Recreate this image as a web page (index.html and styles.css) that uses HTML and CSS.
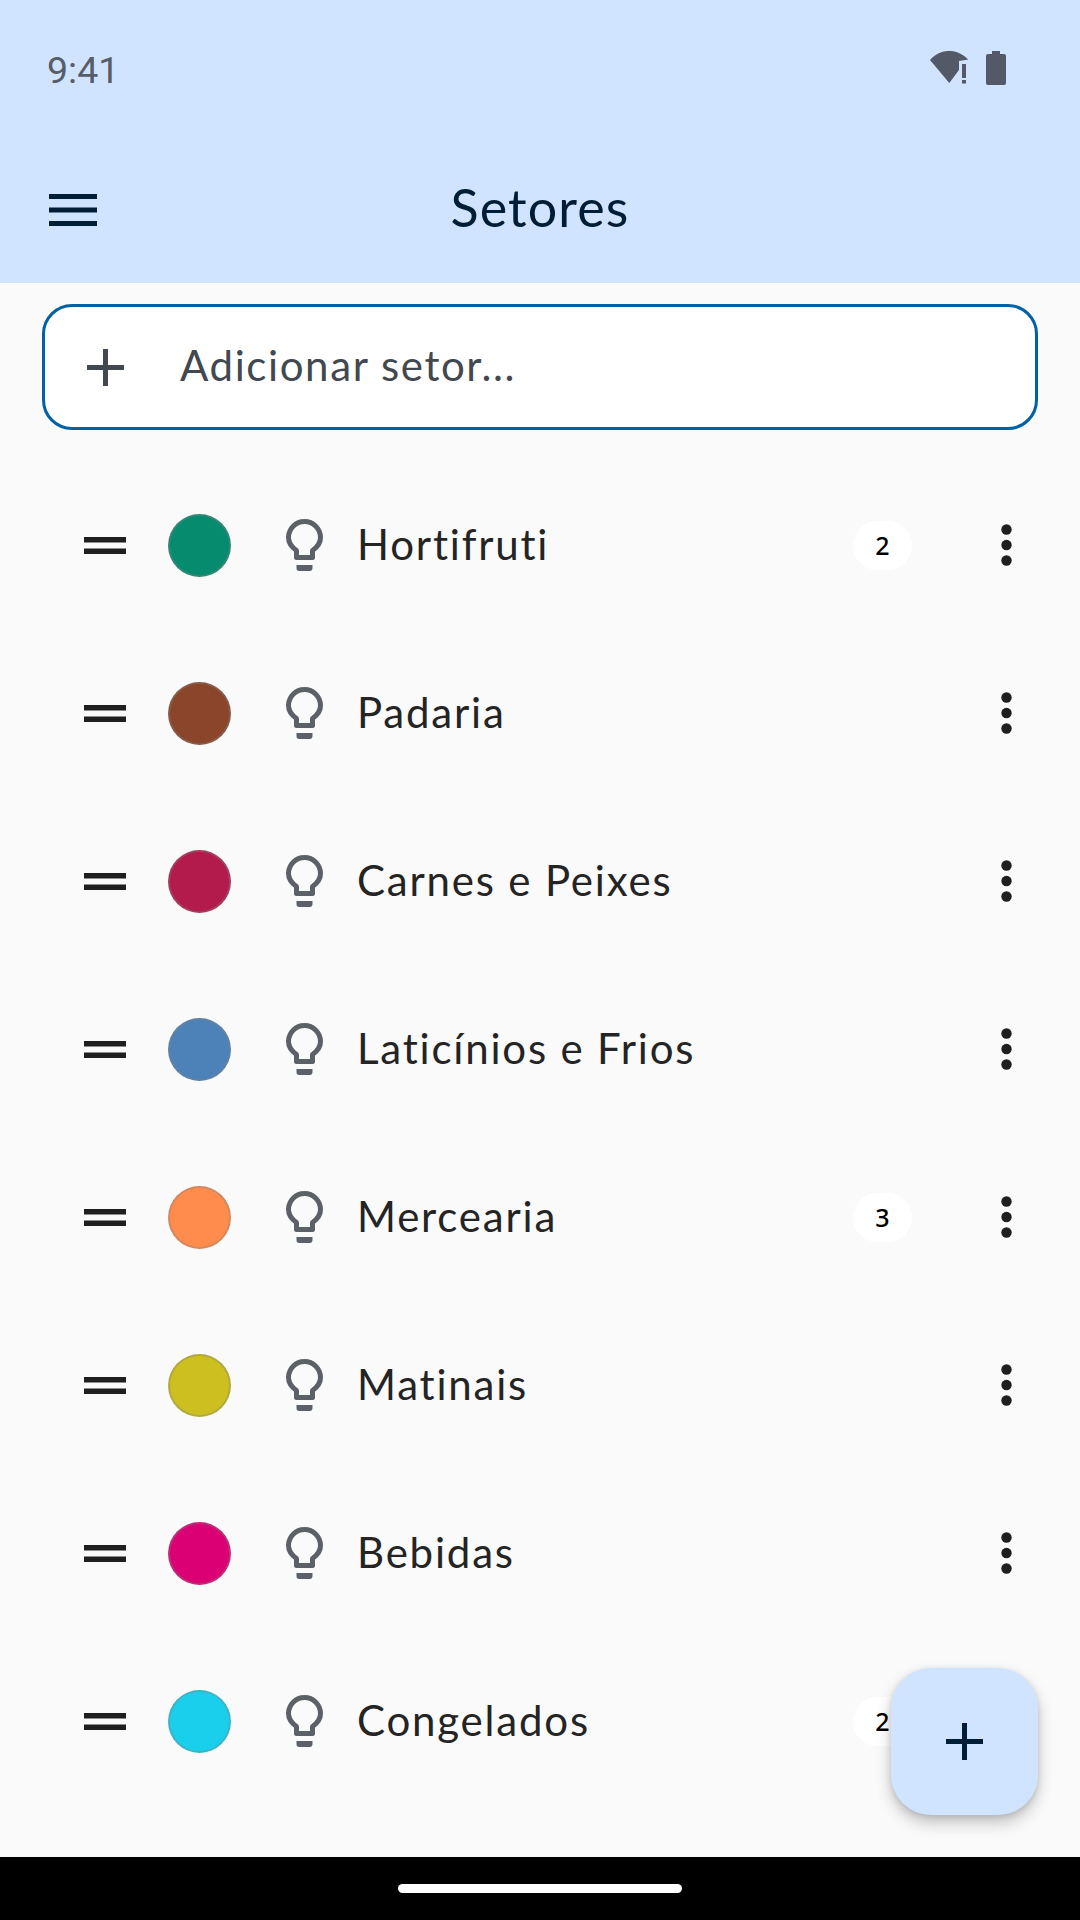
FILE: index.html
```html
<!DOCTYPE html>
<html lang="pt">
<head>
    <meta charset="utf-8">
    <meta name="viewport" content="width=device-width,initial-scale=1.0">
    <title>Setores</title>
    <link rel="stylesheet" href="styles.css">
</head>
<body>
<svg class="defs" width="0" height="0">
    <symbol id="i-handle" viewBox="0 0 42 17"><path d="M0 0h42v5.500H0zM0 11.500h42V17H0z"/></symbol>
    <symbol id="i-bulb" viewBox="0 0 37 52">
        <path d="M18.500 2.500A16 16 0 0 0 2.500 18.500c0 5.500 3 9.500 8 13v7h16v-7c5-3.500 8-7.500 8-13a16 16 0 0 0-16-16Z" fill="none" stroke="currentColor" stroke-width="5" stroke-linejoin="round"/>
        <path d="M10.500 46h16v3a3 3 0 0 1-3 3h-10a3 3 0 0 1-3-3z" fill="currentColor"/>
    </symbol>
    <symbol id="i-dots" viewBox="0 0 11 42"><circle cx="5.500" cy="5.500" r="5.200"/><circle cx="5.500" cy="21" r="5.200"/><circle cx="5.500" cy="36.500" r="5.200"/></symbol>
    <symbol id="i-plus" viewBox="0 0 37 37"><path d="M16 0h5v16h16v5H21v16h-5V21H0v-5h16z"/></symbol>
</svg>

<div class="screen">
    <header class="appbar">
        <div class="status">
            <span class="time">9:41</span>
            <div class="status-icons">
                <svg class="wifi" viewBox="0 0 39 33"><path d="M0 9C11-3 27-3 38.300 8.500L29 10v9L19.300 32Z"/><path d="M32 13h4v14h-4zM32 29h4v3.500h-4z"/></svg>
                <svg class="battery" viewBox="0 0 20 34"><path d="M6 0h8v3h4a2 2 0 0 1 2 2v27a2 2 0 0 1-2 2H2a2 2 0 0 1-2-2V5a2 2 0 0 1 2-2h4z"/></svg>
            </div>
        </div>
        <div class="toolbar">
            <svg class="menu" viewBox="0 0 48 32"><path d="M0 0h48v5H0zM0 13.500h48v5H0zM0 27h48v5H0z"/></svg>
            <h1 class="title">Setores</h1>
        </div>
    </header>

    <main class="content">
        <div class="add-box">
            <svg class="add-icon"><use href="#i-plus"/></svg>
            <span class="add-text">Adicionar setor...</span>
        </div>

        <ul class="sectors">
            <li class="sector">
                <svg class="handle"><use href="#i-handle"/></svg>
                <span class="swatch c-green"></span>
                <svg class="bulb"><use href="#i-bulb"/></svg>
                <span class="name">Hortifruti</span>
                <span class="badge">2</span>
                <svg class="dots"><use href="#i-dots"/></svg>
            </li>
            <li class="sector">
                <svg class="handle"><use href="#i-handle"/></svg>
                <span class="swatch c-brown"></span>
                <svg class="bulb"><use href="#i-bulb"/></svg>
                <span class="name">Padaria</span>
                <svg class="dots"><use href="#i-dots"/></svg>
            </li>
            <li class="sector">
                <svg class="handle"><use href="#i-handle"/></svg>
                <span class="swatch c-crimson"></span>
                <svg class="bulb"><use href="#i-bulb"/></svg>
                <span class="name">Carnes e Peixes</span>
                <svg class="dots"><use href="#i-dots"/></svg>
            </li>
            <li class="sector">
                <svg class="handle"><use href="#i-handle"/></svg>
                <span class="swatch c-blue"></span>
                <svg class="bulb"><use href="#i-bulb"/></svg>
                <span class="name">Laticínios e Frios</span>
                <svg class="dots"><use href="#i-dots"/></svg>
            </li>
            <li class="sector">
                <svg class="handle"><use href="#i-handle"/></svg>
                <span class="swatch c-orange"></span>
                <svg class="bulb"><use href="#i-bulb"/></svg>
                <span class="name">Mercearia</span>
                <span class="badge">3</span>
                <svg class="dots"><use href="#i-dots"/></svg>
            </li>
            <li class="sector">
                <svg class="handle"><use href="#i-handle"/></svg>
                <span class="swatch c-yellow"></span>
                <svg class="bulb"><use href="#i-bulb"/></svg>
                <span class="name">Matinais</span>
                <svg class="dots"><use href="#i-dots"/></svg>
            </li>
            <li class="sector">
                <svg class="handle"><use href="#i-handle"/></svg>
                <span class="swatch c-pink"></span>
                <svg class="bulb"><use href="#i-bulb"/></svg>
                <span class="name">Bebidas</span>
                <svg class="dots"><use href="#i-dots"/></svg>
            </li>
            <li class="sector">
                <svg class="handle"><use href="#i-handle"/></svg>
                <span class="swatch c-cyan"></span>
                <svg class="bulb"><use href="#i-bulb"/></svg>
                <span class="name">Congelados</span>
                <span class="badge">2</span>
                <svg class="dots"><use href="#i-dots"/></svg>
            </li>
        </ul>

        <button class="fab"><svg class="fab-icon"><use href="#i-plus"/></svg></button>
    </main>

    <footer class="navbar"><span class="home-pill"></span></footer>
</div>
</body>
</html>
```

FILE: styles.css
```css
*{box-sizing:border-box;  margin:0;  padding:0;  }
body{background:#fafafa;  font-family:'Lato','Noto Sans',sans-serif;  }
.defs{position:absolute;  }

.screen{width:1080px;  height:1920px;  display:flex;  flex-direction:column;  overflow:hidden;  }

/* top bar */
.appbar{background:#d1e4ff;  height:283px;  flex:none;  }
.status{height:136px;  padding:0 74px 0 47px;  display:flex;  align-items:center;  justify-content:space-between;  }
.time{font:37.500px 'Roboto',sans-serif;  color:#565c68;  padding-top:4px;  }
.status-icons{display:flex;  align-items:flex-start;  gap:17px;  }
.wifi{width:39px;  height:33px;  fill:#535966;  }
.battery{width:20px;  height:34px;  fill:#535966;  }

.toolbar{height:147px;  padding:0 49px;  display:flex;  align-items:center;  }
.menu{width:48px;  height:32px;  fill:#001d36;  }
.title{flex:1;  margin-right:48px;  padding-bottom:5px;  text-align:center;  font-size:52px;  font-weight:400;  letter-spacing:1.100px;  color:#001d36;  }

/* main list */
.content{flex:1;  position:relative;  padding-top:21px;  }

.add-box{margin:0 42px;  height:126px;  background:#fff;  border:3px solid #0061a4;  border-radius:30px;  display:flex;  align-items:center;  padding-left:42px;  gap:56px;  }
.add-icon{width:37px;  height:37px;  fill:#41484f;  }
.add-text{font-size:42px;  letter-spacing:1.600px;  color:#41484f;  padding-bottom:5px;  }

.sectors{list-style:none;  margin-top:31px;  }
.sector{height:168px;  padding:0 68px 0 84px;  display:flex;  align-items:center;  }
.handle{width:42px;  height:17px;  fill:#1f1f1f;  flex:none;  }
.swatch{width:63px;  height:63px;  margin-left:42px;  border-radius:50%;  border:2px solid rgba(128,128,128,.35);  flex:none;  }
.bulb{width:37px;  height:52px;  margin-left:55px;  color:#5c6167;  flex:none;  }
.name{flex:1;  margin-left:34px;  padding-bottom:3px;  font-size:42px;  letter-spacing:1.800px;  color:#242424;  }
.badge{width:59px;  height:49px;  border-radius:25px;  background:#fff;  font:500 25px/49px 'Noto Sans',sans-serif;  text-align:center;  color:#000;  }
.dots{width:11px;  height:42px;  margin-left:89px;  fill:#1f1f1f;  flex:none;  }

.c-green{background:#068b6e;  }
.c-brown{background:#8b452a;  }
.c-crimson{background:#b31b4c;  }
.c-blue{background:#4d82b8;  }
.c-orange{background:#ff8c4d;  }
.c-yellow{background:#ccbf1f;  }
.c-pink{background:#db0073;  }
.c-cyan{background:#1acfeb;  }

/* floating add button, sits over the last row */
.fab{position:absolute;  left:891px;  top:1385px;  width:147px;  height:147px;  border:none;  border-radius:40px;  background:#d1e4ff;  box-shadow:0 8px 16px rgba(0,0,0,.22),0 2px 6px rgba(0,0,0,.12);  display:flex;  align-items:center;  justify-content:center;  }
.fab-icon{width:37px;  height:37px;  fill:#001d36;  }

/* gesture bar */
.navbar{height:63px;  flex:none;  background:#000;  display:flex;  align-items:center;  justify-content:center;  }
.home-pill{width:284px;  height:9px;  border-radius:5px;  background:#fff;  }
```
